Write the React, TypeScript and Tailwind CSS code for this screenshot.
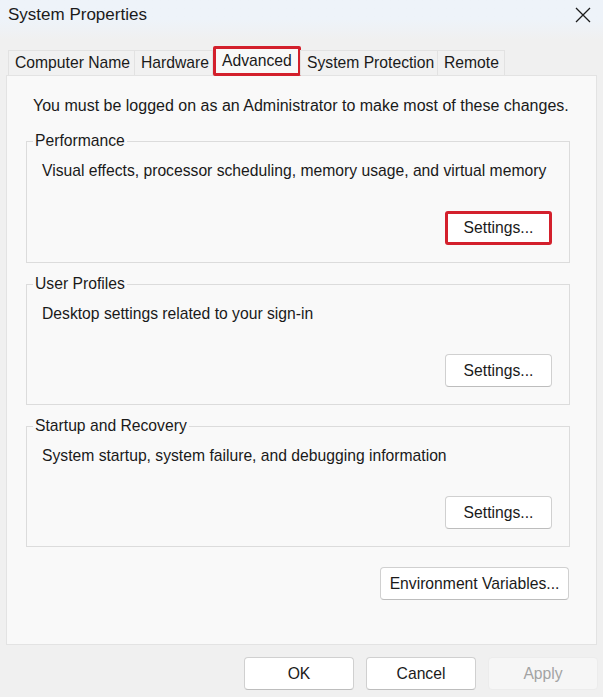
import React from "react";

const font = { fontFamily: '"Liberation Sans", Arial, sans-serif' };

function WinButton({ children, w, highlight, disabled }: { children: React.ReactNode; w: string; highlight?: boolean; disabled?: boolean }) {
  if (highlight) {
    return (
      <button className={`${w} h-[34px] rounded-[3px] border-[3px] border-[#d3202c] bg-white text-[15.7px] text-[#1a1a1a]`}>
        {children}
      </button>
    );
  }
  if (disabled) {
    return (
      <button className={`${w} h-[33px] rounded-[4px] border border-[#ececec] bg-[#f6f6f6] text-[15.7px] text-[#a3a3a3]`}>
        {children}
      </button>
    );
  }
  return (
    <button className={`${w} h-[33px] rounded-[4px] border border-[#d0d0d0] border-b-[#bdbdbd] bg-white text-[15.7px] text-[#1a1a1a]`}>
      {children}
    </button>
  );
}

function Group({ title, text, highlight }: { title: string; text: string; highlight?: boolean }) {
  return (
    <fieldset className="ml-[19px] w-[544px] border border-[#dcdcdc] pb-[17px]">
      <legend className="ml-[6px] px-[2px] text-[15.7px] leading-[18px] text-[#1a1a1a]">{title}</legend>
      <p className="pt-[12px] pl-[15px] text-[15.7px] leading-[18px] text-[#1a1a1a]">{text}</p>
      <div className="mt-[31px] flex justify-end pr-[17px]">
        <WinButton w="w-[107px]" highlight={highlight}>Settings...</WinButton>
      </div>
    </fieldset>
  );
}

const tabs = [
  { label: "Computer Name", w: "w-[127px]" },
  { label: "Hardware", w: "w-[79px]" },
  { label: "Advanced", w: "w-[88px]", active: true },
  { label: "System Protection", w: "w-[138px]" },
  { label: "Remote", w: "w-[68px]" },
];

export default function App() {
  return (
    <div style={font} className="w-[603px] h-[697px] bg-[#f0f0f0] flex flex-col overflow-hidden">
      {/* title bar */}
      <div className="h-[40px] bg-gradient-to-b from-[#eef3f9] via-[#eef3f9] to-[#f0f0f0] flex items-start justify-between pl-[8px] pr-[12px] pt-[5px]">
        <span className="text-[17px] leading-[20px] text-[#1b1b1b]">System Properties</span>
        <svg width="16" height="16" viewBox="0 0 16 16" className="mt-[2px]">
          <path d="M1 1 L15 15 M15 1 L1 15" stroke="#1b1b1b" strokeWidth="1.3" fill="none" />
        </svg>
      </div>

      {/* tabs */}
      <div className="flex items-end pl-[8px] mt-[6px] h-[29px] relative z-10">
        {tabs.map((t) =>
          t.active ? (
            <div
              key={t.label}
              className={`${t.w} h-[30px] border-[3px] border-[#d3202c] rounded-[2px] bg-[#f9f9f9] text-[15.7px] leading-[20px] text-[#1a1a1a] pl-[6px] pt-[2px] -mb-[1px]`}
            >
              {t.label}
            </div>
          ) : (
            <div
              key={t.label}
              className={`${t.w} h-[25px] border border-b-0 border-[#e2e2e2] bg-[#f1f1f1] text-[15.7px] leading-[24px] text-[#1a1a1a] pl-[6px] -ml-[1px] first:ml-0`}
            >
              {t.label}
            </div>
          )
        )}
      </div>

      {/* panel */}
      <div className="mx-[6px] w-[591px] h-[570px] bg-[#f9f9f9] border border-[#e3e3e3] flex flex-col">
        <p className="mt-[21px] ml-[26px] text-[16px] leading-[18px] text-[#1a1a1a]">
          You must be logged on as an Administrator to make most of these changes.
        </p>
        <div className="mt-[17px] flex flex-col gap-[12px]">
          <Group title="Performance" text="Visual effects, processor scheduling, memory usage, and virtual memory" highlight />
          <Group title="User Profiles" text="Desktop settings related to your sign-in" />
          <Group title="Startup and Recovery" text="System startup, system failure, and debugging information" />
        </div>
        <div className="mt-[20px] flex justify-end pr-[27px]">
          <WinButton w="w-[189px]">Environment Variables...</WinButton>
        </div>
      </div>

      {/* bottom buttons */}
      <div className="mt-[12px] flex justify-end gap-[12px] pr-[5px]">
        <WinButton w="w-[110px]">OK</WinButton>
        <WinButton w="w-[110px]">Cancel</WinButton>
        <WinButton w="w-[110px]" disabled>Apply</WinButton>
      </div>
    </div>
  );
}
